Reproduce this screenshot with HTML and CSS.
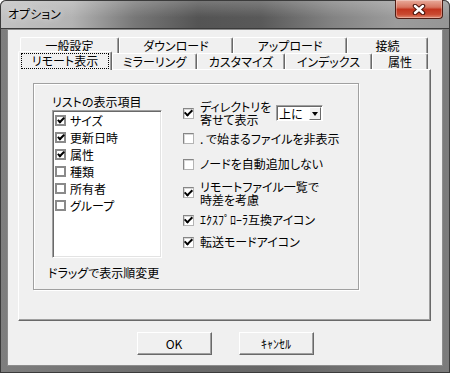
FILE: index.html
```html
<!DOCTYPE html>
<html lang="ja">
<head>
    <meta charset="UTF-8">
    <title>オプション</title>
    <link rel="stylesheet" href="styles.css">
</head>
<body>

    <div class="window">
        <div class="titlebar">
            <span class="title">オプション</span>
            <span class="close">
                <svg width="14" height="11" viewBox="0 0 14 11">
                    <path d="M3 2 L11 9 M11 2 L3 9" stroke="#4a140c" stroke-width="4.5" stroke-linecap="round"/>
                    <path d="M3 2 L11 9 M11 2 L3 9" stroke="#fff" stroke-width="2.4" stroke-linecap="round"/>
                </svg>
            </span>
        </div>

        <div class="client">
            <div class="tabs">
                <div class="tabrow back">
                    <div class="tab">一般設定</div>
                    <div class="tab">ダウンロード</div>
                    <div class="tab">アップロード</div>
                    <div class="tab">接続</div>
                </div>
                <div class="tabrow front">
                    <div class="tab sel"><span class="focus">リモート表示</span></div>
                    <div class="tab">ミラーリング</div>
                    <div class="tab">カスタマイズ</div>
                    <div class="tab">インデックス</div>
                    <div class="tab">属性</div>
                </div>

                <div class="panel">
                    <div class="group">
                        <div class="leftcol">
                            <div class="caption">リストの表示項目</div>
                            <ul class="list">
                                <li><span class="lcb on"></span>サイズ</li>
                                <li><span class="lcb on"></span>更新日時</li>
                                <li><span class="lcb on"></span>属性</li>
                                <li><span class="lcb"></span>種類</li>
                                <li><span class="lcb"></span>所有者</li>
                                <li><span class="lcb"></span>グループ</li>
                            </ul>
                            <div class="hint">ドラッグで表示順変更</div>
                        </div>

                        <div class="opts">
                            <div class="opt">
                                <span class="cb on"></span>
                                <span class="txt two dirtxt">ディレクトリを<br>寄せて表示</span>
                                <span class="combo"><span class="val">上に</span><span class="arrow"></span></span>
                            </div>
                            <div class="opt"><span class="cb"></span><span class="txt">. で始まるファイルを非表示</span></div>
                            <div class="opt"><span class="cb"></span><span class="txt">ノードを自動追加しない</span></div>
                            <div class="opt"><span class="cb on"></span><span class="txt two">リモートファイル一覧で<br>時差を考慮</span></div>
                            <div class="opt"><span class="cb on"></span><span class="txt">ｴｸｽﾌﾟﾛｰﾗ互換アイコン</span></div>
                            <div class="opt"><span class="cb on"></span><span class="txt">転送モードアイコン</span></div>
                        </div>
                    </div>
                </div>
            </div>

            <div class="buttons">
                <button>OK</button>
                <button>ｷｬﾝｾﾙ</button>
            </div>
        </div>
    </div>

</body>
</html>
```

FILE: styles.css
```css
* {
    box-sizing: border-box;
}
body {
    margin: 0;
    background: #fff;
    font-family: "Noto Sans CJK JP", sans-serif;
    font-size: 12px;
    color: #000;
    font-feature-settings: "palt";
}
.window {
    width: 450px;
    height: 373px;
    display: flex;
    flex-direction: column;
    background: linear-gradient(to right, #7e7e7e, #6a6a6a 40%, #666 60%, #7c7c7c);
    border-radius: 6px 6px 0 0;
    box-shadow: inset 0 0 0 1px #3b3b3b;
    overflow: hidden;
}
.titlebar {
    height: 29px;
    display: flex;
    align-items: flex-start;
    border-radius: 6px 6px 0 0;
    background:
        linear-gradient(to bottom, rgba(255, 255, 255, 0.22), rgba(255, 255, 255, 0) 60%),
        linear-gradient(to right, #c3c3c3 0%, #b3b3b3 16%, #777 30%, #545454 44%, #595959 58%, #838383 74%, #9c9c9c 88%, #959595 100%);
    box-shadow: inset 0 0 0 1px #3b3b3b;
}
.title {
    padding: 6px 0 0 8px;
    line-height: 16px;
    text-shadow: 0 0 6px rgba(255, 255, 255, 0.9);
}
.close {
    margin-left: auto;
    margin-right: 7px;
    width: 48px;
    height: 19px;
    display: flex;
    align-items: center;
    justify-content: center;
    border: 1px solid #4f1d14;
    border-top: none;
    border-radius: 0 0 4px 4px;
    background: linear-gradient(to bottom, #e9ab9b 0%, #d77560 40%, #c2351e 52%, #c94a31 80%, #e08a72 100%);
    box-shadow: inset 0 0 0 1px rgba(255, 255, 255, 0.3);
}
.client {
    flex: 1;
    margin: 0 7px 7px;
    background: #f0f0f0;
    border: 1px solid #8d8d8d;
}

/* tabs */
.tabs {
    margin: 7px 0 0 10px;
    width: 413px;
}
.tabrow {
    display: flex;
    height: 16px;
    padding-left: 2px;
}
.tab {
    height: 16px;
    border: 1px solid;
    border-color: #fff #696969 transparent #fff;
    border-bottom: none;
    border-radius: 2px 2px 0 0;
    box-shadow: inset -1px 0 #a0a0a0;
    background: #f0f0f0;
    text-align: center;
    line-height: 15px;
    white-space: nowrap;
}
.back .tab:nth-child(1) { width: 99px; }
.back .tab:nth-child(2) { width: 114px; }
.back .tab:nth-child(3) { width: 114px; }
.back .tab:nth-child(4) { width: 81px; }
.front .tab:nth-child(2) { width: 85px; }
.front .tab:nth-child(3) { width: 88px; }
.front .tab:nth-child(4) { width: 87px; }
.front .tab:nth-child(5) { width: 56px; }
.tab.sel {
    width: 94px;
    height: 19px;
    margin: -2px 0 0 -2px;
    position: relative;
    z-index: 1;
}
.focus {
    display: block;
    height: 16px;
    margin: 1px 2px 0 2px;
    border: 1px dotted #000;
    line-height: 14px;
}
.panel {
    height: 252px;
    border: 1px solid;
    border-color: #fff #696969 #696969 #fff;
    box-shadow: inset -1px -1px #a0a0a0;
    padding: 13px 0 0 14px;
}
.group {
    width: 326px;
    height: 207px;
    display: flex;
    align-items: flex-start;
    padding: 11px 0 0 14px;
    border: 1px solid #a0a0a0;
    box-shadow: inset 1px 1px #fff, 1px 1px #fff;
}

/* list of columns */
.leftcol {
    width: 114px;
}
.caption {
    margin-left: 4px;
    height: 14px;
    line-height: 14px;
}
.list {
    list-style: none;
    margin: 1px 0 0 4px;
    padding: 1px 0 0 1px;
    width: 110px;
    height: 148px;
    background: #fff;
    border: 1px solid;
    border-color: #a0a0a0 #fff #fff #a0a0a0;
    box-shadow: inset 1px 1px #696969, inset -1px -1px #e3e3e3;
}
.list li {
    height: 17px;
    display: flex;
    align-items: center;
    line-height: 17px;
}
.lcb {
    width: 11px;
    height: 11px;
    flex: none;
    margin: 0 4px 0 1px;
    display: flex;
    align-items: center;
    justify-content: center;
    border: 2px solid #8a8a8a;
    background: #fff;
}
.lcb.on::after {
    content: "";
    width: 2px;
    height: 5px;
    margin-top: -2px;
    border: solid #000;
    border-width: 0 2px 2px 0;
    transform: rotate(45deg);
}
.hint {
    margin-top: 8px;
    line-height: 14px;
}

/* right side options */
.opts {
    margin: 5px 0 0 21px;
    display: grid;
    grid-template-rows: 26px 25px 26px 31px 24px 20px;
}
.opt {
    display: flex;
    align-items: center;
}
.cb {
    width: 11px;
    height: 11px;
    flex: none;
    margin-right: 6px;
    display: flex;
    align-items: center;
    justify-content: center;
    border: 1px solid;
    border-color: #868686 #b4b4b4 #b4b4b4 #868686;
    background: #fff;
    box-shadow: inset 1px 1px #d8d8d8;
}
.cb.on::after {
    content: "";
    width: 3px;
    height: 6px;
    margin-top: -2px;
    border: solid #000;
    border-width: 0 2px 2px 0;
    transform: rotate(45deg);
}
.txt {
    line-height: 12px;
    white-space: nowrap;
}
.txt.two {
    line-height: 13px;
}
.dirtxt {
    width: 76px;
}
.combo {
    width: 47px;
    height: 16px;
    display: flex;
    padding: 1px;
    background: #fff;
    border: 1px solid;
    border-color: #a0a0a0 #fff #fff #a0a0a0;
    box-shadow: inset 1px 1px #696969;
}
.val {
    flex: 1;
    padding-left: 1px;
    line-height: 13px;
}
.arrow {
    width: 12px;
    height: 13px;
    display: flex;
    align-items: center;
    justify-content: center;
    border: 1px solid;
    border-color: #fff #696969 #696969 #fff;
    background: #f0f0f0;
}
.arrow::after {
    content: "";
    border-style: solid;
    border-width: 4px 3.5px 0;
    border-color: #000 transparent transparent;
}

/* dialog buttons */
.buttons {
    display: flex;
    justify-content: center;
    gap: 27px;
    margin-top: 11px;
}
button {
    width: 75px;
    height: 23px;
    padding: 0;
    font: inherit;
    color: #000;
    background: #f0f0f0;
    border: 1px solid;
    border-color: #fff #696969 #696969 #fff;
    box-shadow: inset -1px -1px #a0a0a0;
}
```
